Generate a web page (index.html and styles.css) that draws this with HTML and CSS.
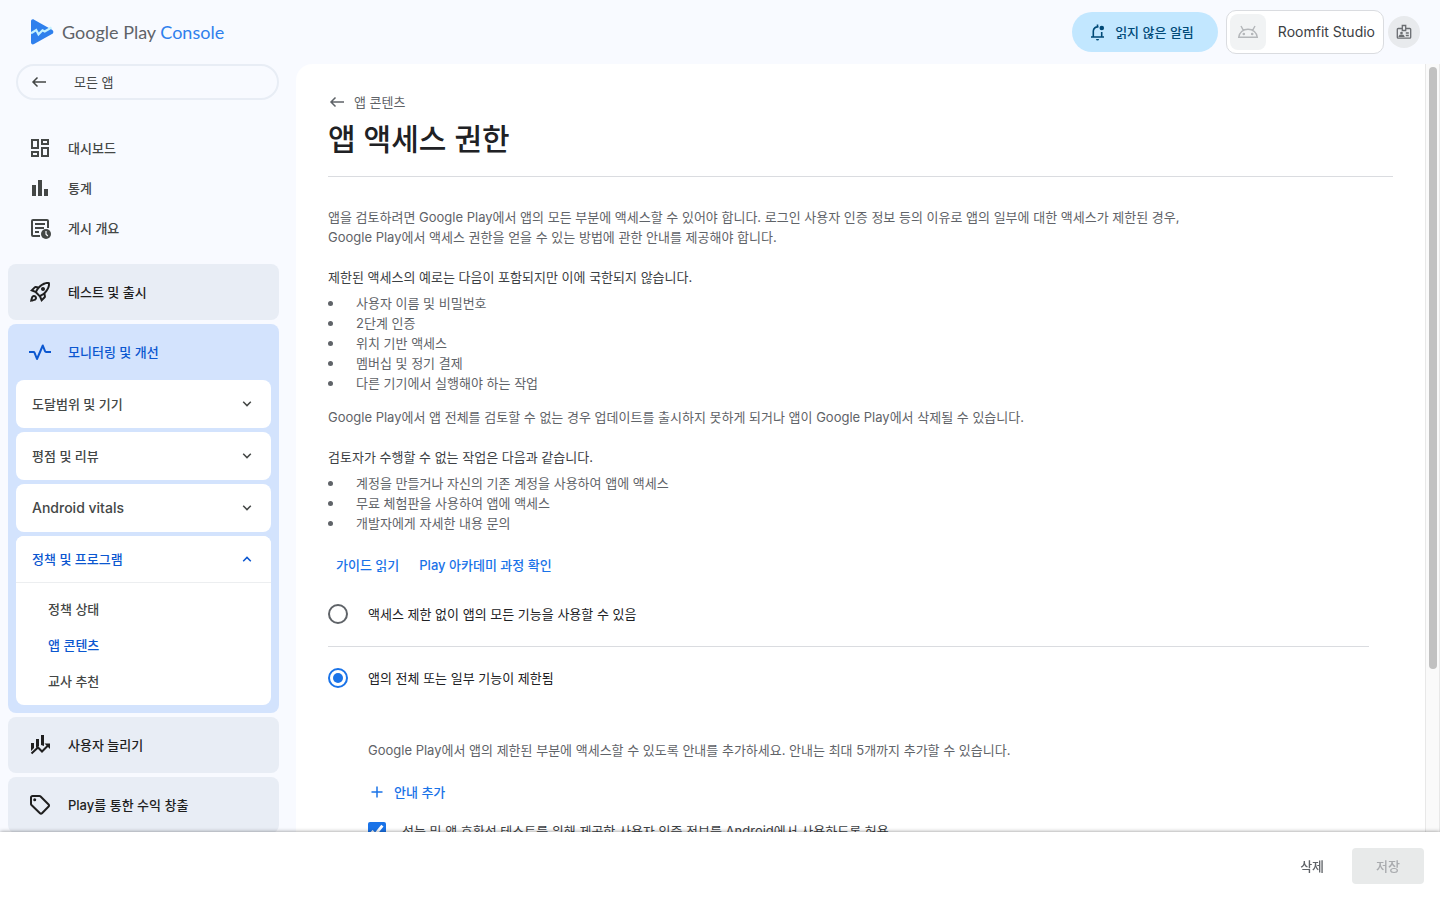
FILE: index.html
```html
<!DOCTYPE html>
<html lang="ko">
  <head>
    <meta charset="utf-8">
    <meta name="viewport" content="width=device-width, initial-scale=1">
    <title>앱 액세스 권한 | Google Play Console</title>
    <link rel="stylesheet" href="styles.css">
  </head>
  <body>
    <header class="topbar">
      <a class="logo" href="#">
        <svg width="23" height="26" viewBox="0 0 23 26">
          <path fill="#2f80ed" d="M0 2.500C0 .6 1.500-.1 3.100.7L21 10.800c1.800 1 1.800 3.200 0 4.200L3.100 25.100C1.500 26 0 25.200 0 23.300z"/>
          <path fill="none" stroke="#c4f1ff" stroke-width="2.200" d="M0 14.200L5.200 11l2.300 4.300 4-4 2.200 1.200L20.500 8.500"/>
        </svg>
        <span class="logo-text">Google Play <b>Console</b></span>
      </a>
      <div class="topbar-actions">
        <button class="inbox" type="button">
          <svg width="18" height="18" viewBox="0 0 18 18" fill="none" stroke="currentColor" stroke-width="1.600">
            <path d="M2 14h13M4.300 14V8a4.200 4.200 0 0 1 5.200-4M12.700 9v5M8.500 1.500V4"/>
            <path d="M7 16h3a1.500 1.500 0 0 1-3 0z" fill="currentColor" stroke="none"/>
            <circle cx="12.800" cy="5" r="2.300" fill="currentColor" stroke="none"/>
          </svg>
          읽지 않은 알림
        </button>
        <button class="account" type="button">
          <span class="account-icon">
            <svg width="22" height="14" viewBox="0 0 22 14" fill="none" stroke="#b4b7ba" stroke-width="1.400">
              <path d="M1.700 12.300C2.200 7.500 6 4.200 11 4.200s8.800 3.300 9.300 8.100zM6.400 5.300L4 1M15.600 5.300L18 1"/>
              <circle cx="6.800" cy="9" r=".6" fill="#b4b7ba"/>
              <circle cx="15.200" cy="9" r=".6" fill="#b4b7ba"/>
            </svg>
          </span>
          Roomfit Studio
        </button>
        <button class="badge" type="button" aria-label="계정">
          <svg width="16" height="16" viewBox="0 0 16 16" fill="none" stroke="#6a6d71" stroke-width="1.300">
            <path d="M6.300 4.500H2.200a.9.900 0 0 0-.9.900v7.900c0 .5.400.9.900.9h11.600c.5 0 .9-.4.900-.9V5.400a.9.900 0 0 0-.9-.9H9.700"/>
            <path d="M6.300 1.500h3.400v5H6.300zM9.800 9h3M9.800 11.500h3M3.300 12.300c.5-1.400 4-1.400 4.500 0z"/>
            <circle cx="5.500" cy="9" r=".7"/>
          </svg>
        </button>
      </div>
    </header>

    <div class="layout">
      <nav class="sidebar">
        <a class="all-apps" href="#">
          <svg width="16" height="16" viewBox="0 0 16 16" fill="none" stroke="currentColor" stroke-width="1.500"><path d="M15 8H2M6.500 3.500L2 8l4.500 4.500"/></svg>
          모든 앱
        </a>

        <ul class="links">
          <li><a href="#">
            <svg width="24" height="24" viewBox="0 0 24 24"><path d="M19 5v2h-4V5h4M9 5v6H5V5h4m10 8v6h-4v-6h4M9 17v2H5v-2h4M21 3h-8v6h8V3zM11 3H3v10h8V3zm10 8h-8v10h8V11zm-10 4H3v6h8v-6z"/></svg>
            대시보드
          </a></li>
          <li><a href="#">
            <svg width="24" height="24" viewBox="0 0 24 24"><path d="M4 9h4v11H4zM10 4h4v16h-4zM16 13h4v7h-4z"/></svg>
            통계
          </a></li>
          <li><a href="#">
            <svg width="24" height="24" viewBox="0 0 24 24">
              <path fill="none" stroke="currentColor" stroke-width="2" d="M12 20H5a1 1 0 0 1-1-1V5a1 1 0 0 1 1-1h14a1 1 0 0 1 1 1v7M7 8h10M7 12h9M7 16h4"/>
              <circle cx="18" cy="18" r="5"/>
              <path fill="none" stroke="#f8faff" stroke-width="1.200" d="M18 15v3.200l1.800 1.800"/>
            </svg>
            게시 개요
          </a></li>
        </ul>

        <div class="sections">
          <a class="section-title" href="#">
            <svg width="24" height="24" viewBox="0 0 24 24"><path d="M6 15c-.83 0-1.580.34-2.120.88C2.700 17.060 2 22 2 22s4.940-.7 6.120-1.880A2.996 2.996 0 0 0 6 15zm.71 3.710c-.28.28-2.170.76-2.170.76s.47-1.880.76-2.170c.17-.19.42-.3.7-.3a1.003 1.003 0 0 1 .71 1.710zM17.420 13.650c6.360-6.360 4.240-11.310 4.240-11.310s-4.950-2.120-11.310 4.240l-2.490-.5a2.030 2.030 0 0 0-1.810.55L2 10.690l5 2.140L11.170 17l2.140 5 4.050-4.050c.47-.47.68-1.150.55-1.810l-.49-2.490zM7.410 10.830l-1.910-.82 1.970-1.970 1.440.29c-.57.83-1.080 1.700-1.500 2.500zm6.580 7.670-.82-1.910c.8-.42 1.670-.93 2.490-1.500l.29 1.440-1.960 1.970zM16 12.240c-1.320 1.320-3.380 2.400-4.040 2.730l-2.930-2.930c.32-.65 1.400-2.710 2.730-4.040 4.680-4.680 8.230-3.990 8.230-3.990s.69 3.550-3.990 8.230zM15 11c1.100 0 2-.9 2-2s-.9-2-2-2-2 .9-2 2 .9 2 2 2z"/></svg>
            테스트 및 출시
          </a>

          <div class="section-open">
            <a class="section-title" href="#">
              <svg width="24" height="24" viewBox="0 0 24 24"><path fill="none" stroke="currentColor" stroke-width="2" stroke-linejoin="round" d="M1 12h4.500c.6 0 .9.300 1.100.800L9 19l5.800-13.500L17 11.200c.2.500.5.800 1.100.800H23"/></svg>
              모니터링 및 개선
            </a>
            <button class="card" type="button">도달범위 및 기기
              <svg width="10" height="6" viewBox="0 0 10 6"><path d="M1.200.8L5 4.600 8.800.8"/></svg>
            </button>
            <button class="card" type="button">평점 및 리뷰
              <svg width="10" height="6" viewBox="0 0 10 6"><path d="M1.200.8L5 4.600 8.800.8"/></svg>
            </button>
            <button class="card latin" type="button">Android vitals
              <svg width="10" height="6" viewBox="0 0 10 6"><path d="M1.200.8L5 4.600 8.800.8"/></svg>
            </button>
            <div class="card-open">
              <button class="card" type="button" aria-expanded="true">정책 및 프로그램
                <svg width="10" height="6" viewBox="0 0 10 6"><path d="M1.200 5.200L5 1.400l3.800 3.800"/></svg>
              </button>
              <ul class="sub">
                <li><a href="#">정책 상태</a></li>
                <li><a class="active" href="#">앱 콘텐츠</a></li>
                <li><a href="#">교사 추천</a></li>
              </ul>
            </div>
          </div>

          <a class="section-title" href="#">
            <svg width="24" height="24" viewBox="0 0 24 24">
              <path d="M3 10h3v5l-3 3zM8 6h3v7l-3 2zM13 2h3v11l-3-1z"/>
              <path fill="none" stroke="currentColor" stroke-width="2" d="M3.500 20.500l6.500-6 4 4 6.500-6.500"/>
              <path d="M16.500 10.500H22V16z"/>
            </svg>
            사용자 늘리기
          </a>
          <a class="section-title" href="#">
            <svg width="24" height="24" viewBox="0 0 24 24">
              <path fill="none" stroke="currentColor" stroke-width="2" stroke-linejoin="round" d="M3 4.500C3 3.700 3.700 3 4.500 3h7c.4 0 .8.200 1.100.500l8 8c.6.600.6 1.400 0 2l-6.600 6.800c-.6.600-1.400.6-2 0l-8.500-8.300c-.3-.3-.5-.7-.5-1.100z"/>
              <circle cx="6.700" cy="6.700" r="1.500"/>
            </svg>
            Play를 통한 수익 창출
          </a>
        </div>
      </nav>

      <main class="content">
        <a class="back" href="#">
          <svg width="16" height="16" viewBox="0 0 16 16" fill="none" stroke="currentColor" stroke-width="1.500"><path d="M15 8H2M6.500 3.500L2 8l4.500 4.500"/></svg>
          앱 콘텐츠
        </a>
        <h1>앱 액세스 권한</h1>

        <section class="intro">
          <p>앱을 검토하려면 Google Play에서 앱의 모든 부분에 액세스할 수 있어야 합니다. 로그인 사용자 인증 정보 등의 이유로 앱의 일부에 대한 액세스가 제한된 경우, Google Play에서 액세스 권한을 얻을 수 있는 방법에 관한 안내를 제공해야 합니다.</p>
          <h2>제한된 액세스의 예로는 다음이 포함되지만 이에 국한되지 않습니다.</h2>
          <ul>
            <li>사용자 이름 및 비밀번호</li>
            <li>2단계 인증</li>
            <li>위치 기반 액세스</li>
            <li>멤버십 및 정기 결제</li>
            <li>다른 기기에서 실행해야 하는 작업</li>
          </ul>
          <p>Google Play에서 앱 전체를 검토할 수 없는 경우 업데이트를 출시하지 못하게 되거나 앱이 Google Play에서 삭제될 수 있습니다.</p>
          <h2>검토자가 수행할 수 없는 작업은 다음과 같습니다.</h2>
          <ul>
            <li>계정을 만들거나 자신의 기존 계정을 사용하여 앱에 액세스</li>
            <li>무료 체험판을 사용하여 앱에 액세스</li>
            <li>개발자에게 자세한 내용 문의</li>
          </ul>
        </section>

        <div class="guides">
          <a href="#">가이드 읽기</a>
          <a href="#">Play 아카데미 과정 확인</a>
        </div>

        <form class="access" id="access">
          <label class="option">
            <input type="radio" name="access" value="all">
            액세스 제한 없이 앱의 모든 기능을 사용할 수 있음
          </label>
          <hr>
          <label class="option">
            <input type="radio" name="access" value="restricted" checked>
            앱의 전체 또는 일부 기능이 제한됨
          </label>
          <div class="restricted">
            <p>Google Play에서 앱의 제한된 부분에 액세스할 수 있도록 안내를 추가하세요. 안내는 최대 5개까지 추가할 수 있습니다.</p>
            <button class="add" type="button">
              <svg width="12" height="12" viewBox="0 0 12 12" fill="none" stroke="currentColor" stroke-width="1.500"><path d="M6 .5v11M.5 6h11"/></svg>
              안내 추가
            </button>
            <label class="consent">
              <input type="checkbox" checked>
              성능 및 앱 호환성 테스트를 위해 제공한 사용자 인증 정보를 Android에서 사용하도록 허용
            </label>
          </div>
        </form>
      </main>
      <div class="scrollbar"><div class="thumb"></div></div>
    </div>

    <footer class="savebar">
      <button class="discard" type="button">삭제</button>
      <button class="save" type="submit" form="access" disabled>저장</button>
    </footer>
  </body>
</html>
```

FILE: styles.css
```css
* { box-sizing: border-box; }

body {
  display: flex;
  flex-direction: column;
  height: 100vh;
  margin: 0;
  overflow: hidden;
  background: #f8faff;
  color: #5f6368;
  font: 13px/20px Inter, "Noto Sans CJK KR", sans-serif;
}

a { color: inherit; text-decoration: none; }
button { border: 0; background: none; color: inherit; font: inherit; cursor: pointer; }
ul { margin: 0; padding: 0; list-style: none; }
svg { flex: none; }

/* top bar */
.topbar {
  display: flex;
  flex: none;
  align-items: center;
  justify-content: space-between;
  height: 64px;
  padding: 0 20px 0 31px;
}

.logo { display: flex; align-items: center; gap: 8px; }
.logo-text { color: #5f6368; font: 18px/24px Lato, sans-serif; }
.logo-text b { color: #2f80ed; font-weight: 400; }

.topbar-actions { display: flex; align-items: center; }

.inbox {
  display: flex;
  align-items: center;
  gap: 8px;
  height: 40px;
  margin-right: 8px;
  padding: 0 24px 0 17px;
  border-radius: 20px;
  background: #c2e7ff;
  color: #004a77;
  font-weight: 500;
}

.account {
  display: flex;
  align-items: center;
  gap: 12px;
  height: 44px;
  margin-right: 4px;
  padding: 0 8px 0 3px;
  border: 1px solid #dadce0;
  border-radius: 10px;
  background: #fff;
  color: #3c4043;
  font-size: 14px;
}

.account-icon {
  display: flex;
  align-items: center;
  justify-content: center;
  width: 36px;
  height: 36px;
  border-radius: 8px;
  background: #f1f3f4;
}

.badge {
  display: flex;
  align-items: center;
  justify-content: center;
  width: 32px;
  height: 32px;
  padding: 0;
  border-radius: 50%;
  background: #e8eaed;
}

.layout { display: flex; flex: 1; min-height: 0; }

/* sidebar */
.sidebar {
  flex: none;
  width: 296px;
  padding: 0 17px 0 8px;
  overflow: hidden;
  color: #444746;
  font-weight: 500;
}

.links svg, .section-title svg { fill: currentColor; }

.all-apps {
  display: flex;
  align-items: center;
  gap: 27px;
  height: 36px;
  margin-left: 8px;
  padding: 0 13px;
  border: 2px solid #e8edf5;
  border-radius: 18px;
  font-weight: 400;
}

.links { padding: 28px 0 16px; }
.links a { display: flex; align-items: center; gap: 16px; height: 40px; padding: 0 20px; }

.sections { display: flex; flex-direction: column; gap: 4px; }

.section-title {
  display: flex;
  align-items: center;
  gap: 16px;
  height: 56px;
  padding: 0 20px;
  border-radius: 8px;
  background: #e8edf5;
  color: #1f1f1f;
}

.section-open {
  display: flex;
  flex-direction: column;
  gap: 4px;
  padding: 0 8px 8px;
  border-radius: 8px;
  background: #d3e3fd;
}

.section-open .section-title { margin: 0 -8px -4px; background: none; color: #0b57d0; }

.card {
  display: flex;
  align-items: center;
  justify-content: space-between;
  width: 100%;
  height: 48px;
  padding: 0 19px 0 16px;
  border-radius: 8px;
  background: #fff;
  font-weight: 500;
}

.latin { font-size: 14px; }
.card svg { fill: none; stroke: currentColor; stroke-width: 1.5; }

.card-open { border-radius: 8px; background: #fff; }
.card-open .card { height: 47px; border-bottom: 1px solid #eceef0; border-radius: 8px 8px 0 0; color: #0b57d0; }

.sub { padding: 8px 32px 6px; }
.sub a { display: block; line-height: 36px; }
.sub .active { color: #0b57d0; }

/* page */
.content {
  flex: 1;
  min-width: 0;
  padding: 28px 32px 128px;
  overflow-y: auto;
  border-top-left-radius: 16px;
  background: #fff;
  scrollbar-width: none;
}

.scrollbar {
  flex: none;
  width: 15px;
  padding: 3px;
  border: solid #e8e8e8;
  border-width: 0 1px;
  background: #fafafa;
}

.thumb { width: 8px; height: 79%; margin: 0 auto; border-radius: 4px; background: #c1c1c1; }

.back { display: flex; align-items: center; gap: 9px; padding-left: 1px; }

h1 {
  margin: 0 0 30px;
  padding: 7px 0 17px;
  border-bottom: 1px solid #dadce0;
  color: #202124;
  font-size: 30px;
  font-weight: 500;
  line-height: 40px;
}

.intro { max-width: 880px; }
.intro p { margin: 0 0 20px; }
.intro h2 { margin: 0 0 6px; color: #3c4043; font-size: 13px; font-weight: 400; }
.intro ul { margin-bottom: 14px; }
.intro li { display: flex; align-items: center; gap: 23px; }
.intro li::before { width: 5px; height: 5px; border-radius: 50%; background: #5f6368; content: ""; }

.guides { display: flex; gap: 20px; padding: 8px; color: #1a73e8; font-weight: 500; }

.access { margin: 10px 24px 0 0; }
.access hr { margin: 11px 0 10px; border: 0; border-top: 1px solid #dadce0; }

.option { display: flex; align-items: center; gap: 20px; height: 42px; color: #202124; }

.option input {
  appearance: none;
  flex: none;
  width: 20px;
  height: 20px;
  margin: 0;
  border: 2px solid #5f6368;
  border-radius: 50%;
}

.option input:checked { padding: 3px; border-color: #1a73e8; background: #1a73e8 content-box; }

.restricted { padding: 41px 0 0 40px; }
.restricted p { margin: 0 0 22px; }

.add { display: flex; align-items: center; gap: 11px; padding: 0 3px; color: #1a73e8; font-weight: 500; }

.consent { display: flex; align-items: center; gap: 16px; margin-top: 19px; color: #3c4043; }
.consent input { width: 18px; height: 18px; margin: 0; accent-color: #1a73e8; }

/* bottom bar */
.savebar {
  display: flex;
  flex: none;
  align-items: center;
  justify-content: flex-end;
  gap: 16px;
  height: 68px;
  padding: 0 16px;
  background: #fff;
  box-shadow: 0 0 4px rgba(0, 0, 0, .45);
  z-index: 1;
}

.savebar button { height: 36px; padding: 0 24px; border-radius: 4px; font-weight: 500; }
.savebar .discard { padding: 0 12px; }
.savebar .save { background: #e8eaea; color: #a9abae; }
```
